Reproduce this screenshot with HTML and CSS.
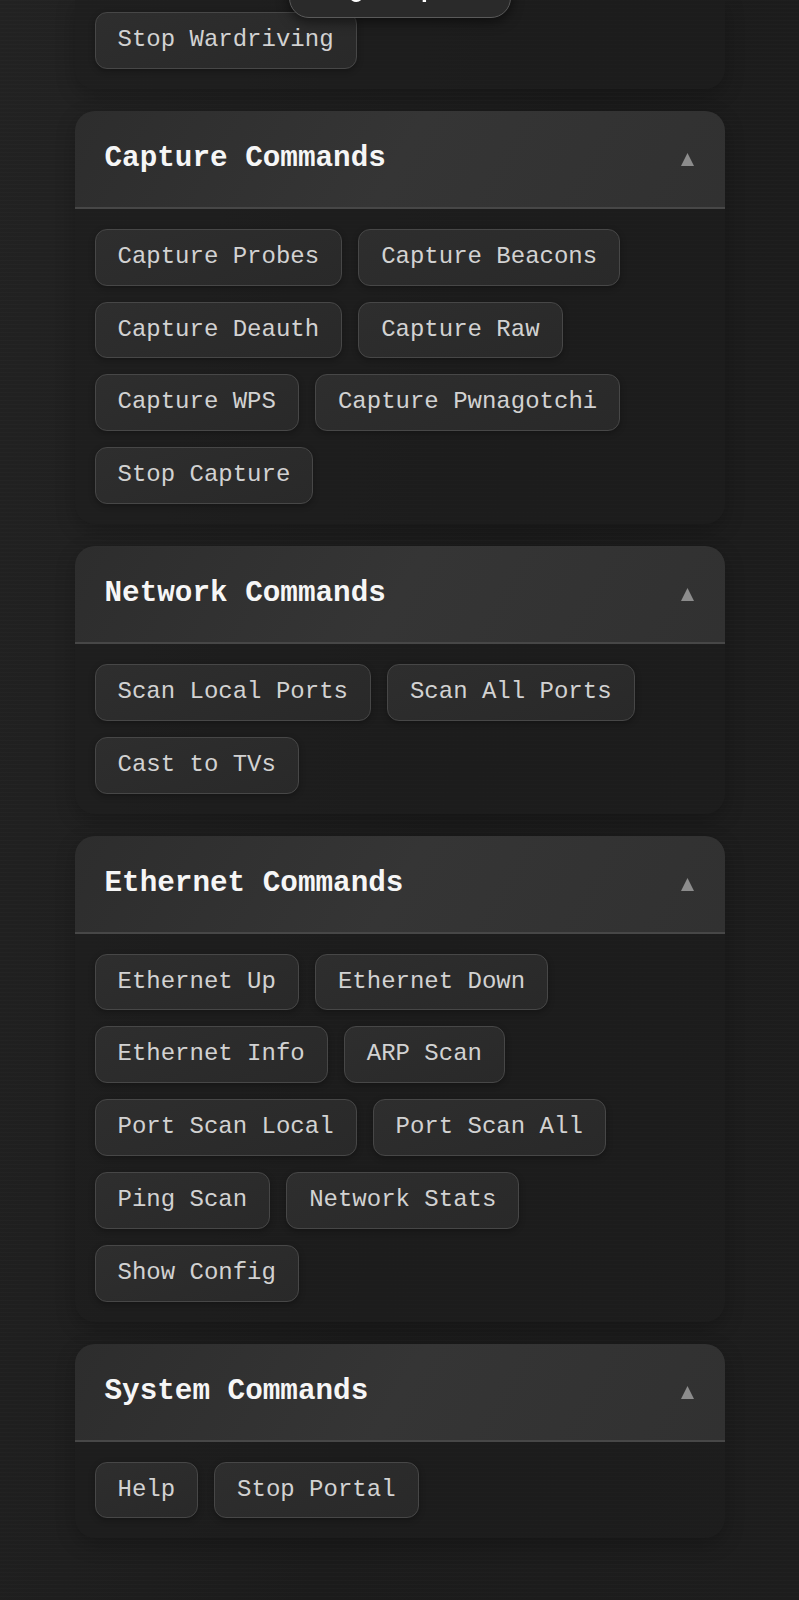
FILE: index.html
```html
<!DOCTYPE html>
<html lang="en">
<head>
<meta charset="utf-8">
<title>Commands</title>
<link rel="stylesheet" href="styles.css">
</head>
<body>
<div class="float-btn">Logs Export</div>
<main class="container">
  <section class="card card-partial">
    <div class="card-body">
      <button class="cmd">Stop Wardriving</button>
    </div>
  </section>

  <section class="card">
    <div class="card-header">
      <h2 class="card-title">Capture Commands</h2>
      <svg class="arrow" width="13" height="13" viewBox="0 0 13 13"><polygon points="6.5,0 13,13 0,13"/></svg>
    </div>
    <div class="card-body">
      <button class="cmd">Capture Probes</button>
      <button class="cmd">Capture Beacons</button>
      <button class="cmd">Capture Deauth</button>
      <button class="cmd">Capture Raw</button>
      <button class="cmd">Capture WPS</button>
      <button class="cmd">Capture Pwnagotchi</button>
      <button class="cmd">Stop Capture</button>
    </div>
  </section>

  <section class="card">
    <div class="card-header">
      <h2 class="card-title">Network Commands</h2>
      <svg class="arrow" width="13" height="13" viewBox="0 0 13 13"><polygon points="6.5,0 13,13 0,13"/></svg>
    </div>
    <div class="card-body">
      <button class="cmd">Scan Local Ports</button>
      <button class="cmd">Scan All Ports</button>
      <button class="cmd">Cast to TVs</button>
    </div>
  </section>

  <section class="card">
    <div class="card-header">
      <h2 class="card-title">Ethernet Commands</h2>
      <svg class="arrow" width="13" height="13" viewBox="0 0 13 13"><polygon points="6.5,0 13,13 0,13"/></svg>
    </div>
    <div class="card-body">
      <button class="cmd">Ethernet Up</button>
      <button class="cmd">Ethernet Down</button>
      <button class="cmd">Ethernet Info</button>
      <button class="cmd">ARP Scan</button>
      <button class="cmd">Port Scan Local</button>
      <button class="cmd">Port Scan All</button>
      <button class="cmd">Ping Scan</button>
      <button class="cmd">Network Stats</button>
      <button class="cmd">Show Config</button>
    </div>
  </section>

  <section class="card">
    <div class="card-header">
      <h2 class="card-title">System Commands</h2>
      <svg class="arrow" width="13" height="13" viewBox="0 0 13 13"><polygon points="6.5,0 13,13 0,13"/></svg>
    </div>
    <div class="card-body">
      <button class="cmd">Help</button>
      <button class="cmd">Stop Portal</button>
    </div>
  </section>
</main>
</body>
</html>
```

FILE: styles.css
```css
html {
  background: #1c1c1c;
}

body {
  margin: 0;
  padding: 0 0 68px;
  min-height: 1600px;
  box-sizing: border-box;
  font-family: "Liberation Mono", "Courier New", monospace;
  color: #ddd;
  background:
    repeating-linear-gradient(to bottom, rgba(255,255,255,0.012) 0px, rgba(255,255,255,0.012) 1px, rgba(0,0,0,0) 1px, rgba(0,0,0,0) 4px),
    linear-gradient(100deg, #222222 0%, #1b1b1b 55%, #1d1d1d 100%);
}

.container {
  width: 650px;
  margin: 0 auto;
  display: flex;
  flex-direction: column;
  gap: 22px;
}

.card {
  border-radius: 20px;
  background: rgba(30, 30, 30, 0.55);
  box-shadow: 0 6px 20px rgba(0, 0, 0, 0.22);
  overflow: hidden;
}

.card-partial {
  border-top-left-radius: 0;
  border-top-right-radius: 0;
}

.card-partial .card-body {
  padding-top: 12px;
}

.card-header {
  display: flex;
  align-items: center;
  justify-content: space-between;
  padding: 30px 31px 30px 30px;
  background: linear-gradient(120deg, #2d2d2d 0%, #353535 50%, #313131 100%);
  border-bottom: 2px solid #474747;
}

.card-title {
  margin: 0;
  font-size: 29.3px;
  line-height: 36px;
  font-weight: bold;
  color: #f6f6f6;
}

.arrow {
  display: block;
  fill: #8c8c8c;
  margin-top: 2px;
}

.card-body {
  display: flex;
  flex-wrap: wrap;
  column-gap: 16px;
  row-gap: 16px;
  padding: 20px 20px 20px;
}

.cmd {
  font-family: "Liberation Mono", "Courier New", monospace;
  font-size: 24px;
  line-height: 28.8px;
  padding: 13px 22px;
  color: #d2d2d2;
  background: linear-gradient(160deg, #2e2e2e, #292929);
  border: 1px solid #474747;
  border-radius: 12px;
  box-shadow: 0 2px 6px rgba(0, 0, 0, 0.3);
  cursor: pointer;
}

.float-btn {
  position: fixed;
  top: -38px;
  left: 50%;
  transform: translateX(-50%);
  width: 222px;
  height: 56px;
  box-sizing: border-box;
  padding: 10px 22px;
  font-size: 24px;
  line-height: 36px;
  font-weight: bold;
  color: #fff;
  text-align: center;
  background: #2a2a2a;
  border: 1px solid #5a5a5a;
  border-radius: 20px;
  box-shadow: 0 4px 12px rgba(0, 0, 0, 0.5);
  z-index: 10;
}
```
